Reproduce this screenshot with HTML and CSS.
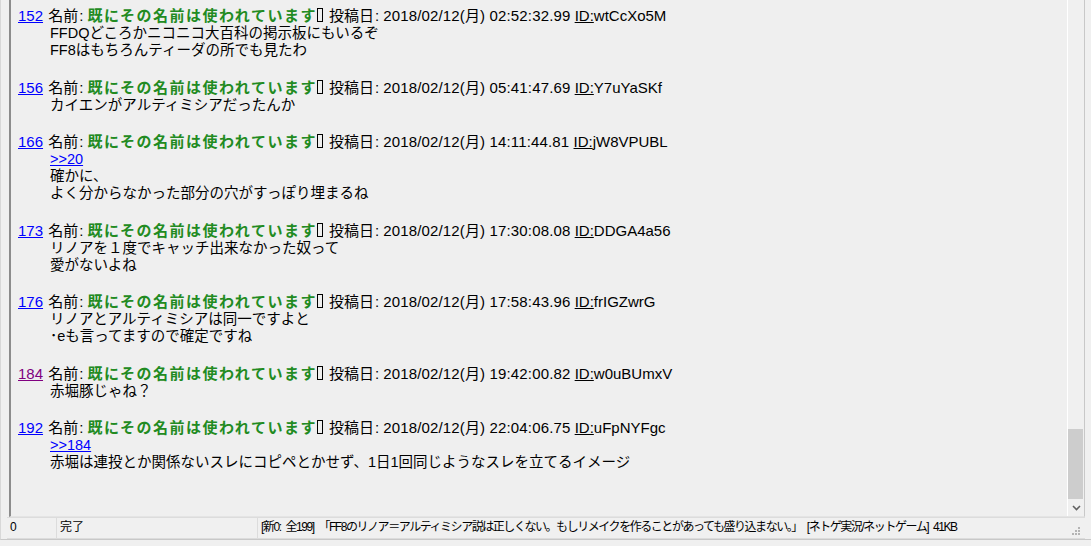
FILE: index.html
```html
<!DOCTYPE html>
<html lang="ja">
<head>
    <meta charset="UTF-8">
    <title>ネトゲ実況 - FF8のリノア＝アルティミシア説</title>
    <link rel="stylesheet" href="styles.css">
</head>
<body>
    <div class="window">
        <div class="viewer">
            <div class="thread">
                <div class="post">
                    <div class="head"><a class="num" href="#">152</a> 名前<span class="colon">:</span><b class="name">既にその名前は使われています</b><span class="tofu"></span> 投稿日<span class="colon">:</span><span class="date">2018/02/12(月) 02:52:32.99</span> <u>ID:</u>wtCcXo5M</div>
                    <div class="body">FFDQどころかニコニコ大百科の掲示板にもいるぞ<br>FF8はもちろんティーダの所でも見たわ</div>
                </div>
                <div class="post">
                    <div class="head"><a class="num" href="#">156</a> 名前<span class="colon">:</span><b class="name">既にその名前は使われています</b><span class="tofu"></span> 投稿日<span class="colon">:</span><span class="date">2018/02/12(月) 05:41:47.69</span> <u>ID:</u>Y7uYaSKf</div>
                    <div class="body">カイエンがアルティミシアだったんか</div>
                </div>
                <div class="post">
                    <div class="head"><a class="num" href="#">166</a> 名前<span class="colon">:</span><b class="name">既にその名前は使われています</b><span class="tofu"></span> 投稿日<span class="colon">:</span><span class="date">2018/02/12(月) 14:11:44.81</span> <u>ID:</u>jW8VPUBL</div>
                    <div class="body"><a class="anchor" href="#">&gt;&gt;20</a><br>確かに、<br>よく分からなかった部分の穴がすっぽり埋まるね</div>
                </div>
                <div class="post">
                    <div class="head"><a class="num" href="#">173</a> 名前<span class="colon">:</span><b class="name">既にその名前は使われています</b><span class="tofu"></span> 投稿日<span class="colon">:</span><span class="date">2018/02/12(月) 17:30:08.08</span> <u>ID:</u>DDGA4a56</div>
                    <div class="body">リノアを１度でキャッチ出来なかった奴って<br>愛がないよね</div>
                </div>
                <div class="post">
                    <div class="head"><a class="num" href="#">176</a> 名前<span class="colon">:</span><b class="name">既にその名前は使われています</b><span class="tofu"></span> 投稿日<span class="colon">:</span><span class="date">2018/02/12(月) 17:58:43.96</span> <u>ID:</u>frIGZwrG</div>
                    <div class="body">リノアとアルティミシアは同一ですよと<br>･eも言ってますので確定ですね</div>
                </div>
                <div class="post">
                    <div class="head"><a class="num visited" href="#">184</a> 名前<span class="colon">:</span><b class="name">既にその名前は使われています</b><span class="tofu"></span> 投稿日<span class="colon">:</span><span class="date">2018/02/12(月) 19:42:00.82</span> <u>ID:</u>w0uBUmxV</div>
                    <div class="body">赤堀豚じゃね？</div>
                </div>
                <div class="post">
                    <div class="head"><a class="num" href="#">192</a> 名前<span class="colon">:</span><b class="name">既にその名前は使われています</b><span class="tofu"></span> 投稿日<span class="colon">:</span><span class="date">2018/02/12(月) 22:04:06.75</span> <u>ID:</u>uFpNYFgc</div>
                    <div class="body"><a class="anchor" href="#">&gt;&gt;184</a><br>赤堀は連投とか関係ないスレにコピペとかせず、1日1回同じようなスレを立てるイメージ</div>
                </div>
            </div>
            <div class="scrollbar">
                <div class="track"><div class="thumb"></div></div>
                <div class="arrow">
                    <svg width="9" height="6" viewBox="0 0 9 6"><path d="M1 1 L4.5 4.5 L8 1" fill="none" stroke="#606060" stroke-width="1.6"/></svg>
                </div>
            </div>
        </div>
        <div class="statusbar">
            <div class="cell count">0</div>
            <div class="cell state">完了</div>
            <div class="cell info">[新0: 全199] 「FF8のリノア＝アルティミシア説は正しくない。もしリメイクを作ることがあっても盛り込まない。」 [ネトゲ実況/ネットゲーム] 41KB</div>
            <div class="grip">
                <svg width="10" height="10" viewBox="0 0 10 10" fill="#b4b4b4">
                    <rect x="7" y="1" width="2" height="2"/>
                    <rect x="4" y="4" width="2" height="2"/><rect x="7" y="4" width="2" height="2"/>
                    <rect x="1" y="7" width="2" height="2"/><rect x="4" y="7" width="2" height="2"/><rect x="7" y="7" width="2" height="2"/>
                </svg>
            </div>
        </div>
    </div>
</body>
</html>
```

FILE: styles.css
```css
body {
    margin: 0;
    height: 546px;
    overflow: hidden;
    background-color: #f0f0f0;
    font-family: "Liberation Sans", "Noto Sans CJK JP", sans-serif;
}

.window {
    display: flex;
    flex-direction: column;
    height: 540px;
    padding-left: 8px;
    padding-right: 6px;
    border-bottom: 1px solid #c8c8c8;
    border-left: 1px solid #d8d8d8;
    box-sizing: border-box;
}

.viewer {
    display: flex;
    height: 517px;
    border-left: 2px solid #8c8c8c;
    border-right: 1px solid #c8c8c8;
    border-bottom: 1px solid #e4e4e4;
    box-sizing: border-box;
    background-color: #efefef;
}

.thread {
    flex: 1;
    padding: 6px 0 0 7px;
    overflow: hidden;
    font-size: 15px;
    color: #000;
}

.post {
    margin-bottom: 18.5px;
}

.head {
    line-height: 19px;
    white-space: nowrap;
}

.num {
    color: #0000ff;
    margin-right: 1px;
}

.num.visited {
    color: #800080;
}

.colon {
    margin: 0 4px 0 1px;
}

.name {
    color: #228b22;
    letter-spacing: 1.5px;
}

.tofu {
    display: inline-block;
    width: 4px;
    height: 12px;
    border: 1px solid #000;
    margin: 0 2px 0 0;
    vertical-align: -1px;
}

.date {
    letter-spacing: 0.15px;
}

.body {
    padding-left: 32px;
    line-height: 17px;
    font-size: 14.5px;
}

.anchor {
    color: #0000ff;
}

.scrollbar {
    display: flex;
    flex-direction: column;
    width: 16px;
    border-left: 1px solid #ffffff;
    background-color: #f0f0f0;
}

.track {
    flex: 1;
    display: flex;
    flex-direction: column;
    justify-content: flex-end;
}

.thumb {
    height: 70px;
    margin-right: 1px;
    background-color: #cdcdcd;
}

.arrow {
    height: 17px;
    display: flex;
    justify-content: center;
    align-items: center;
}

.statusbar {
    display: flex;
    height: 20px;
    margin-left: -2px;
    border-top: 1px solid #dcdcdc;
    border-bottom: 1px solid #dcdcdc;
    font-size: 12px;
    line-height: 18px;
    color: #000;
}

.cell {
    padding-left: 3px;
    border-right: 1px solid #dcdcdc;
    white-space: nowrap;
}

.count {
    width: 46px;
}

.state {
    width: 197px;
}

.info {
    flex: 1;
    border-right: none;
    letter-spacing: -1.45px;
    word-spacing: 3px;
}

.grip {
    width: 14px;
    display: flex;
    align-items: flex-end;
    padding-bottom: 2px;
}
```
